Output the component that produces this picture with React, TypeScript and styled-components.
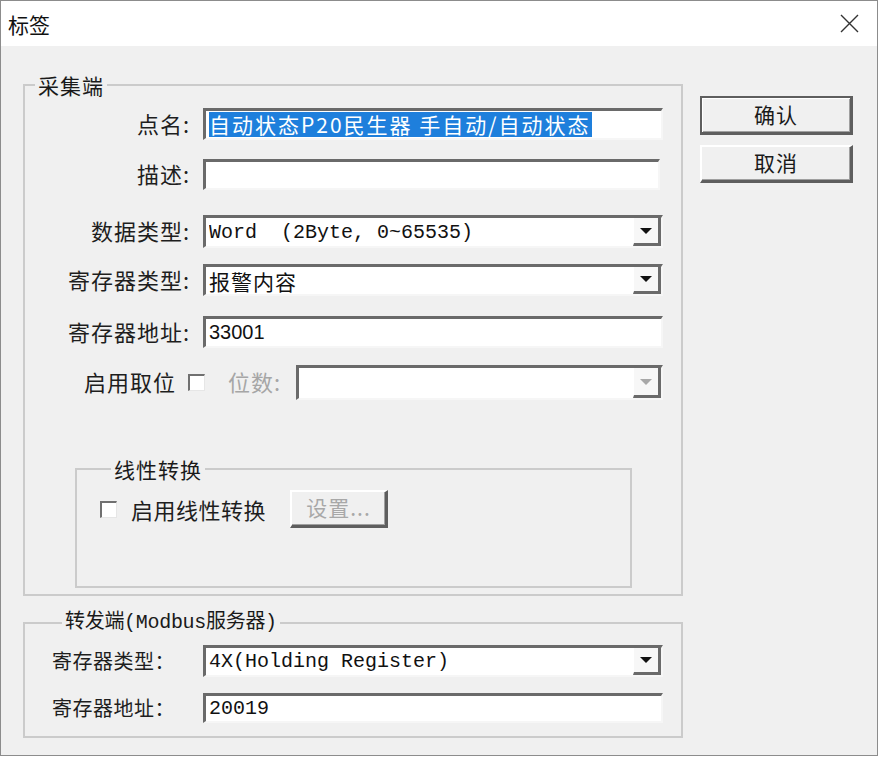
import React from 'react';
import styled, {createGlobalStyle} from 'styled-components';

const cjk = `"Noto Sans CJK SC", "Noto Sans", sans-serif`;
const mono = `"Liberation Mono", "Noto Sans CJK SC", monospace`;

const GlobalStyle = createGlobalStyle`
  html, body {
    margin: 0;
    padding: 0;
    background: #ffffff;
  }
  body {
    font-family: ${cjk};
  }
`;

const Window = styled.div`
  box-sizing: border-box;
  width: 878px;
  height: 756px;
  border: 1px solid #8c8c8c;
  background: #f0f0f0;
  display: flex;
  flex-direction: column;
`;

const TitleBar = styled.div`
  height: 45px;
  background: #ffffff;
  display: flex;
  align-items: center;
  justify-content: space-between;
  padding: 0 18px 0 7px;
`;

const Title = styled.span`
  font-family: ${cjk};
  font-size: 21px;
  color: #111;
`;

const CloseButton = styled.div`
  width: 20px;
  height: 20px;
  display: flex;
  align-items: center;
  justify-content: center;
`;

const Body = styled.div`
  flex: 1;
  display: flex;
  align-items: flex-start;
  padding: 28px 0 0 22px;
  gap: 17px;
`;

const MainColumn = styled.div`
  width: 660px;
  display: flex;
  flex-direction: column;
`;

const Group = styled.fieldset<{ $mt?: number; $ml?: number; $w?: number; $pad: string }>`
  margin: ${p => p.$mt ?? 0}px 0 0 ${p => p.$ml ?? 0}px;
  width: ${p => (p.$w ? `${p.$w}px` : 'auto')};
  box-sizing: border-box;
  min-width: 0;
  padding: ${p => p.$pad};
  border: 2px solid #cbcbcb;
`;

const Legend = styled.legend<{ $mono?: boolean; $ml: number }>`
  margin-left: ${p => p.$ml}px;
  padding: 0 3px;
  font-family: ${p => (p.$mono ? mono : cjk)};
  font-size: ${p => (p.$mono ? 20 : 21)}px;
  letter-spacing: ${p => (p.$mono ? -0.3 : 1)}px;
  line-height: 22px;
  color: #1a1a1a;
`;

const Row = styled.div<{ $mt?: number }>`
  display: flex;
  align-items: center;
  margin-top: ${p => p.$mt ?? 0}px;
`;

const Label = styled.span<{ $w: number; $left?: boolean; $full?: boolean }>`
  width: ${p => p.$w}px;
  flex: none;
  text-align: ${p => (p.$left ? 'left' : 'right')};
  font-family: ${cjk};
  font-size: ${p => (p.$full ? 20 : 22)}px;
  letter-spacing: ${p => (p.$full ? 0.5 : 1)}px;
  line-height: 26px;
  margin-top: ${p => (p.$full ? 0 : -3)}px;
  color: #1e1e1e;
  white-space: nowrap;
`;

const DisabledLabel = styled(Label)`
  color: #a6a6a6;
`;

const TextBox = styled.div<{ $w: number; $h: number; $ml?: number; $mono?: boolean }>`
  box-sizing: border-box;
  width: ${p => p.$w}px;
  height: ${p => p.$h}px;
  margin-left: ${p => p.$ml ?? 13}px;
  flex: none;
  background: #ffffff;
  border-top: 3px solid #6a6a6a;
  border-left: 3px solid #6a6a6a;
  border-right: 2px solid #f6f6f6;
  border-bottom: 2px solid #f6f6f6;
  display: flex;
  align-items: center;
  padding-left: 3px;
  font-family: ${p => (p.$mono ? mono : `"Liberation Sans", ${cjk}`)};
  font-size: 20px;
  color: #111;
  white-space: pre;
  overflow: hidden;
`;

const Selected = styled.span`
  background: #1e7fdc;
  color: #ffffff;
  font-family: ${cjk};
  font-size: 21px;
  line-height: 25px;
  letter-spacing: 2px;
  padding-right: 1px;
`;

const Combo = styled(TextBox)`
  padding-right: 0;
`;

const ComboText = styled.span`
  flex: 1;
  overflow: hidden;
`;

const CjkValue = styled.span`
  font-family: ${cjk};
  font-size: 21px;
  letter-spacing: 1px;
`;

const DropButton = styled.div<{ $disabled?: boolean }>`
  box-sizing: border-box;
  width: 28px;
  height: 100%;
  flex: none;
  background: #f7f7f7;
  border-left: 1px solid #ffffff;
  border-right: 3px solid #6a6a6a;
  border-bottom: 3px solid #6a6a6a;
  display: flex;
  align-items: center;
  justify-content: center;

  &::after {
    content: '';
    border-left: 6px solid transparent;
    border-right: 6px solid transparent;
    border-top: 6px solid ${p => (p.$disabled ? '#a8a8a8' : '#111111')};
  }
`;

const CheckBox = styled.div<{ $ml: number }>`
  box-sizing: border-box;
  width: 17px;
  height: 17px;
  flex: none;
  margin-left: ${p => p.$ml}px;
  background: #ffffff;
  border-top: 2px solid #707070;
  border-left: 2px solid #707070;
  border-right: 1px solid #e6e6e6;
  border-bottom: 1px solid #e6e6e6;
`;

const CheckLabel = styled.span`
  margin-left: 14px;
  font-family: ${cjk};
  font-size: 22px;
  letter-spacing: 0.5px;
  color: #1e1e1e;
`;

const PushButton = styled.div<{ $w: number; $h: number; $isDefault?: boolean; $disabled?: boolean }>`
  box-sizing: border-box;
  width: ${p => p.$w}px;
  height: ${p => p.$h}px;
  flex: none;
  display: flex;
  align-items: center;
  justify-content: center;
  padding-bottom: 3px;
  background: #f0f0f0;
  border-top: 2px solid ${p => (p.$isDefault ? '#5e5e5e' : '#ffffff')};
  border-left: 2px solid ${p => (p.$isDefault ? '#5e5e5e' : '#ffffff')};
  border-right: 3px solid #5e5e5e;
  border-bottom: 3px solid #5e5e5e;
  box-shadow: ${p => (p.$isDefault ? 'inset 1px 1px 0 #ffffff, inset -1px -1px 0 #a0a0a0' : 'inset -1px -1px 0 #a0a0a0')};
  font-family: ${cjk};
  font-size: 21px;
  letter-spacing: 1px;
  color: ${p => (p.$disabled ? '#a8a8a8' : '#1a1a1a')};
`;

const ButtonColumn = styled.div`
  margin-top: 22px;
  width: 153px;
  display: flex;
  flex-direction: column;
  gap: 10px;
`;

const App = () => {
    return (
        <>
            <GlobalStyle/>
            <Window>
                <TitleBar>
                    <Title>标签</Title>
                    <CloseButton>
                        <svg width="19" height="19" viewBox="0 0 19 19">
                            <path d="M1 1 L18 18 M18 1 L1 18" stroke="#333" strokeWidth="1.4" fill="none"/>
                        </svg>
                    </CloseButton>
                </TitleBar>
                <Body>
                    <MainColumn>
                        <Group $pad="12px 0 6px 0">
                            <Legend $ml={10}>采集端</Legend>
                            <Row>
                                <Label $w={165}>点名:</Label>
                                <TextBox $w={460} $h={32}>
                                    <Selected>自动状态P20民生器 手自动/自动状态</Selected>
                                </TextBox>
                            </Row>
                            <Row $mt={19}>
                                <Label $w={165}>描述:</Label>
                                <TextBox $w={457} $h={31}/>
                            </Row>
                            <Row $mt={25}>
                                <Label $w={165}>数据类型:</Label>
                                <Combo $w={460} $h={33} $mono>
                                    <ComboText>{'Word  (2Byte, 0~65535)'}</ComboText>
                                    <DropButton/>
                                </Combo>
                            </Row>
                            <Row $mt={16}>
                                <Label $w={165}>寄存器类型:</Label>
                                <Combo $w={460} $h={32}>
                                    <ComboText><CjkValue>报警内容</CjkValue></ComboText>
                                    <DropButton/>
                                </Combo>
                            </Row>
                            <Row $mt={20}>
                                <Label $w={165}>寄存器地址:</Label>
                                <TextBox $w={460} $h={32}>33001</TextBox>
                            </Row>
                            <Row $mt={17}>
                                <Label $w={151}>启用取位</Label>
                                <CheckBox $ml={12}/>
                                <DisabledLabel $w={68} $left style={{marginLeft: 23}}>位数:</DisabledLabel>
                                <Combo $w={367} $h={35} $ml={0}>
                                    <ComboText/>
                                    <DropButton $disabled/>
                                </Combo>
                            </Row>
                            <Group $mt={58} $ml={50} $w={557} $pad="10px 0 58px 23px">
                                <Legend $ml={11}>线性转换</Legend>
                                <Row>
                                    <CheckBox $ml={0}/>
                                    <CheckLabel>启用线性转换</CheckLabel>
                                    <PushButton $w={98} $h={38} $disabled style={{marginLeft: 24}}>设置...</PushButton>
                                </Row>
                            </Group>
                        </Group>
                        <Group $mt={16} $pad="11px 0 13px 27px">
                            <Legend $ml={10} $mono>转发端(Modbus服务器)</Legend>
                            <Row>
                                <Label $w={151} $left $full>寄存器类型：</Label>
                                <Combo $w={460} $h={32} $ml={0} $mono>
                                    <ComboText>4X(Holding Register)</ComboText>
                                    <DropButton/>
                                </Combo>
                            </Row>
                            <Row $mt={16}>
                                <Label $w={151} $left $full>寄存器地址：</Label>
                                <TextBox $w={460} $h={30} $ml={0} $mono>20019</TextBox>
                            </Row>
                        </Group>
                    </MainColumn>
                    <ButtonColumn>
                        <PushButton $w={153} $h={39} $isDefault>确认</PushButton>
                        <PushButton $w={153} $h={38}>取消</PushButton>
                    </ButtonColumn>
                </Body>
            </Window>
        </>
    );
};

export default App;
